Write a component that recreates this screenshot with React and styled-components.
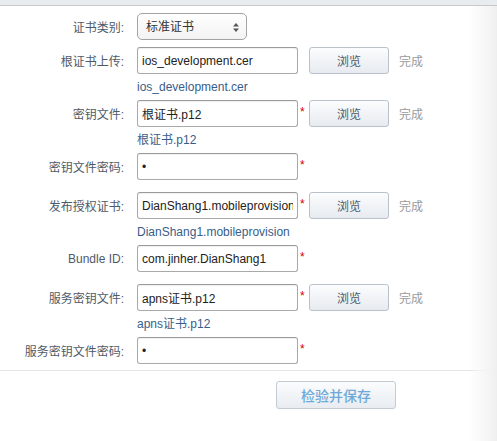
import React from "react";
import styled, { createGlobalStyle } from "styled-components";

const Global = createGlobalStyle`
  html, body { margin: 0; padding: 0; }
  body {
    font-family: "Liberation Sans", "Noto Sans CJK SC", sans-serif;
    font-size: 12px;
    background: #fff;
  }
`;

const Page = styled.div`
  min-height: 441px;
  background: linear-gradient(90deg, #ffffff 0, #ffffff 468px, #f7f7f7 485px, #efefef 497px);
`;

const TopBar = styled.div`
  height: 5px;
  background: #e9ecef;
  border-bottom: 1px solid #c6cacf;
`;

const Form = styled.div`
  padding-top: 7px;
`;

const Row = styled.div`
  display: flex;
  align-items: center;
  height: 27px;
  margin-bottom: ${(p) => p.$mb || 0}px;
`;

const Label = styled.label`
  width: 124px;
  margin-right: 13px;
  text-align: right;
  color: #4e5a68;
  font-size: 12px;
  white-space: nowrap;
  flex-shrink: 0;
`;

const SelectWrap = styled.div`
  position: relative;
  width: 110px;
  height: 27px;
`;

const Select = styled.select`
  appearance: none;
  -webkit-appearance: none;
  width: 100%;
  height: 100%;
  box-sizing: border-box;
  border: 1px solid #a4a4a4;
  border-radius: 5px;
  background: linear-gradient(#ffffff, #f3f3f3);
  font-family: "Liberation Sans", "Noto Sans CJK SC", sans-serif;
  font-size: 12px;
  color: #333;
  padding: 0 0 0 8px;
  outline: none;
`;

const Arrows = styled.svg`
  position: absolute;
  right: 8px;
  top: 10px;
  pointer-events: none;
`;

const Input = styled.input`
  width: 161px;
  height: 27px;
  box-sizing: border-box;
  border: 1px solid #a9a9a9;
  border-top-color: #9a9a9a;
  border-radius: 3px;
  box-shadow: inset 0 1px 1px rgba(0, 0, 0, 0.06);
  padding: 0 4px;
  font-family: "Liberation Sans", "Noto Sans CJK SC", sans-serif;
  font-size: 12px;
  color: #222;
  background: #fff;
  outline: none;
  flex-shrink: 0;
`;

const Star = styled.span`
  width: 11px;
  align-self: flex-start;
  padding-top: 6px;
  padding-left: 2px;
  box-sizing: border-box;
  color: #d40000;
  font-size: 12px;
  line-height: 12px;
  visibility: ${(p) => (p.$show ? "visible" : "hidden")};
  flex-shrink: 0;
`;

const BrowseButton = styled.button`
  width: 80px;
  height: 27px;
  box-sizing: border-box;
  border: 1px solid #b9c1ca;
  border-radius: 3px;
  background: linear-gradient(#fbfcfd, #e7ebf0);
  color: #4c5968;
  font-family: "Liberation Sans", "Noto Sans CJK SC", sans-serif;
  font-size: 12px;
  padding: 0;
  cursor: pointer;
  flex-shrink: 0;
`;

const Done = styled.span`
  margin-left: 10px;
  color: #9a9a9a;
  font-size: 12px;
`;

const FileName = styled.div`
  margin-left: 137px;
  line-height: 26px;
  height: 26px;
  color: #385d8a;
  font-size: 12px;
`;

const Divider = styled.div`
  margin-top: 6px;
  height: 1px;
  background: linear-gradient(90deg, #e6e6e6 0, #e6e6e6 470px, rgba(230, 230, 230, 0) 490px);
`;

const Footer = styled.div`
  padding: 10px 0 0 276px;
`;

const SaveButton = styled.button`
  width: 120px;
  height: 28px;
  box-sizing: border-box;
  border: 1px solid #c3cbd4;
  border-radius: 3px;
  background: linear-gradient(#fbfcfd, #e8ecf1);
  color: #6fa9d8;
  font-family: "Liberation Sans", "Noto Sans CJK SC", sans-serif;
  font-size: 14px;
  font-weight: 500;
  padding: 0;
  cursor: pointer;
`;

const fields = [
  { label: "根证书上传:", value: "ios_development.cer", star: false, browse: true, file: "ios_development.cer" },
  { label: "密钥文件:", value: "根证书.p12", star: true, browse: true, file: "根证书.p12" },
  { label: "密钥文件密码:", value: "x", password: true, star: true, mb: 12 },
  { label: "发布授权证书:", value: "DianShang1.mobileprovision", star: true, browse: true, file: "DianShang1.mobileprovision" },
  { label: "Bundle ID:", value: "com.jinher.DianShang1", star: true, mb: 12 },
  { label: "服务密钥文件:", value: "apns证书.p12", star: true, browse: true, file: "apns证书.p12" },
  { label: "服务密钥文件密码:", value: "x", password: true, star: true },
];

export default function App() {
  return (
    <Page>
      <Global />
      <TopBar />
      <Form>
        <Row $mb={7}>
          <Label>证书类别:</Label>
          <SelectWrap>
            <Select defaultValue="std">
              <option value="std">标准证书</option>
              <option value="ent">企业证书</option>
            </Select>
            <Arrows width="6" height="9" viewBox="0 0 6 9">
              <path d="M3 0 L6 3.5 L0 3.5 Z" fill="#555" />
              <path d="M3 9 L6 5.5 L0 5.5 Z" fill="#555" />
            </Arrows>
          </SelectWrap>
        </Row>
        {fields.map((f, i) => (
          <React.Fragment key={i}>
            <Row $mb={f.mb}>
              <Label>{f.label}</Label>
              <Input
                type={f.password ? "password" : "text"}
                defaultValue={f.value}
                readOnly
              />
              <Star $show={f.star}>*</Star>
              {f.browse && (
                <>
                  <BrowseButton>浏览</BrowseButton>
                  <Done>完成</Done>
                </>
              )}
            </Row>
            {f.file && <FileName>{f.file}</FileName>}
          </React.Fragment>
        ))}
        <Divider />
        <Footer>
          <SaveButton>检验并保存</SaveButton>
        </Footer>
      </Form>
    </Page>
  );
}
